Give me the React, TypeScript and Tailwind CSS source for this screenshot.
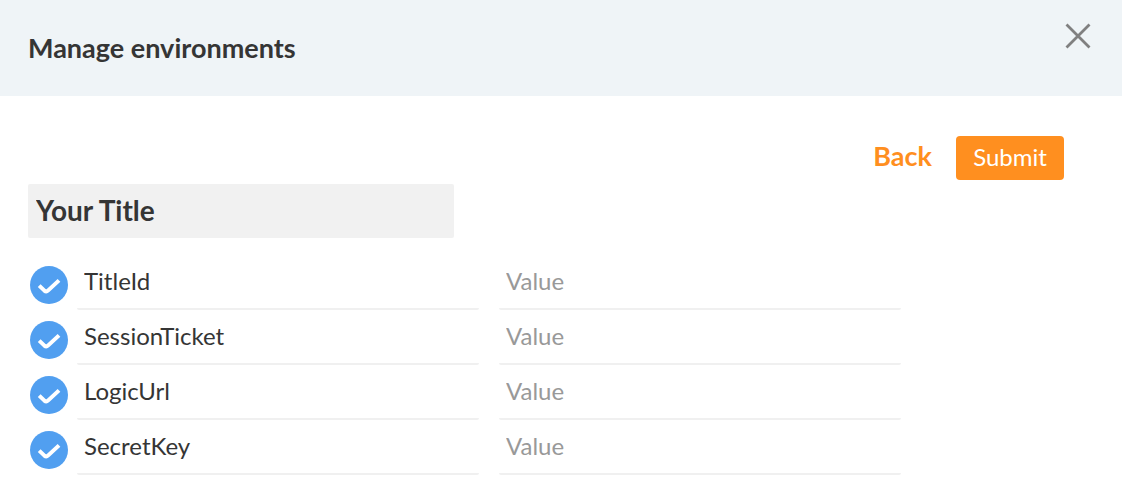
import { useState } from 'react';

const initialRows = ['TitleId', 'SessionTicket', 'LogicUrl', 'SecretKey'];

function VariableRow({ name }: { name: string }) {
  const [enabled, setEnabled] = useState(true);
  const [key, setKey] = useState(name);
  const [value, setValue] = useState('');
  return (
    <li className="flex h-[55px] items-stretch">
      <label className="mt-[11px] mr-[9px] ml-0.5 block size-[38px] shrink-0 cursor-pointer">
        <input
          type="checkbox"
          aria-label={`Enable ${name}`}
          checked={enabled}
          onChange={(e) => setEnabled(e.target.checked)}
          className="peer sr-only"
        />
        <svg viewBox="0 0 38 38" className="size-full text-[#b5b5b5] peer-checked:text-[#519ff0]">
          <circle cx="19" cy="19" r="19" fill="currentColor" />
          <path
            d="M9.2 19.6L14.4 24.6Q16.3 26.2 18.2 24.4L29 14.4"
            fill="none"
            stroke="#fff"
            strokeWidth="4"
          />
        </svg>
      </label>
      <input
        type="text"
        aria-label="Key"
        value={key}
        onChange={(e) => setKey(e.target.value)}
        className="mr-5 min-w-0 flex-1 rounded-[2px] border-b-2 border-[#f0f0f0] px-[7px] pb-0.5 text-[#353535] outline-none"
      />
      <input
        type="text"
        aria-label={`Value of ${name}`}
        placeholder="Value"
        value={value}
        onChange={(e) => setValue(e.target.value)}
        className="min-w-0 flex-1 rounded-[2px] border-b-2 border-[#f0f0f0] px-[7px] pb-0.5 text-[#353535] outline-none placeholder:text-[#999]"
      />
    </li>
  );
}

export default function App() {
  const [title, setTitle] = useState('Your Title');
  return (
    <div className="bg-white font-[Lato,sans-serif] text-[24px] text-[#353535] antialiased">
      <header className="flex h-24 items-start justify-between bg-[#eff4f7] pr-[31px] pl-7">
        <h1 className="self-center text-[27px] font-bold">Manage environments</h1>
        <button type="button" aria-label="Close" className="mt-[23px] size-[26px] text-[#808080]">
          <svg viewBox="0 0 26 26" className="size-full" fill="none" stroke="currentColor" strokeWidth="2.8">
            <path d="M1.5 1.5l23 23M24.5 1.5L1.5 24.5" />
          </svg>
        </button>
      </header>
      <form className="px-7 pt-10" onSubmit={(e) => e.preventDefault()}>
        <div className="flex items-start justify-end gap-6 pr-[30px]">
          <button type="button" className="text-[27px] leading-[40px] font-bold text-[#ff8f1f]">
            Back
          </button>
          <button type="submit" className="h-11 w-[108px] rounded-[4px] bg-[#ff8f1f] pb-0.5 text-white">
            Submit
          </button>
        </div>
        <input
          type="text"
          aria-label="Environment name"
          value={title}
          onChange={(e) => setTitle(e.target.value)}
          className="mt-1 block h-[54px] w-2/5 rounded-[2px] bg-[#f1f1f1] px-2 pb-0.5 text-[28px] font-bold outline-none"
        />
        <ul className="mt-[17px] max-w-[873px]">
          {initialRows.map((name) => (
            <VariableRow key={name} name={name} />
          ))}
        </ul>
      </form>
    </div>
  );
}
